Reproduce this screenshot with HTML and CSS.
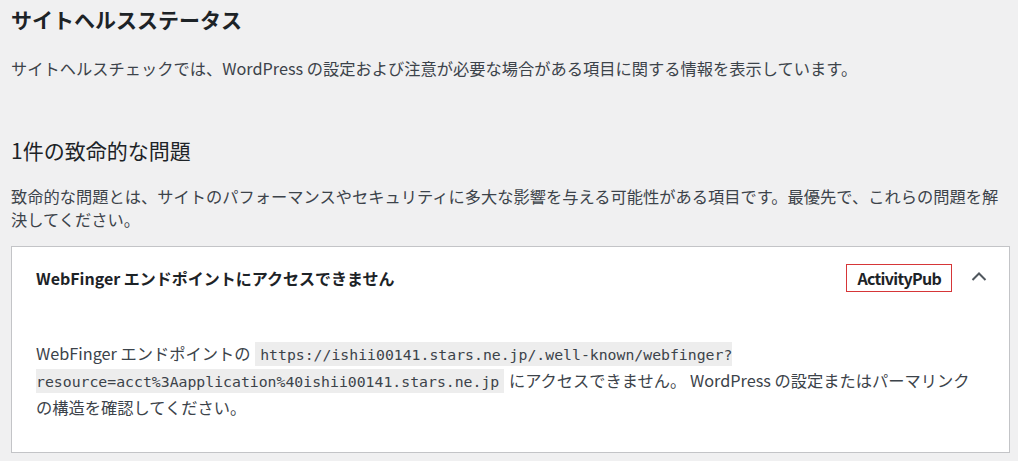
FILE: index.html
```html
<!DOCTYPE html>
<html lang="ja">
<head>
    <meta charset="UTF-8">
    <meta name="viewport" content="width=device-width, initial-scale=1.0">
    <title>サイトヘルスステータス</title>
    <link rel="stylesheet" href="styles.css">
</head>
<body>
    <div class="health-body">
        <h1 class="page-title">サイトヘルスステータス</h1>
        <p class="intro">サイトヘルスチェックでは、WordPress の設定および注意が必要な場合がある項目に関する情報を表示しています。</p>

        <h2 class="issues-title">1件の致命的な問題</h2>
        <p class="issues-desc">致命的な問題とは、サイトのパフォーマンスやセキュリティに多大な影響を与える可能性がある項目です。最優先で、これらの問題を解決してください。</p>

        <!-- Accordion item -->
        <div class="accordion">
            <div class="accordion-trigger">
                <span class="accordion-title">WebFinger エンドポイントにアクセスできません</span>
                <span class="badge red">ActivityPub</span>
                <svg class="icon" width="16" height="10" viewBox="0 0 16 10">
                    <polyline points="1.5,9 8,2.5 14.5,9" fill="none" stroke="#50575e" stroke-width="2"/>
                </svg>
            </div>
            <div class="accordion-panel">
                <p>WebFinger エンドポイントの <code>https://ishii00141.stars.ne.jp/.well-known/webfinger?resource=acct%3Aapplication%40ishii00141.stars.ne.jp</code> にアクセスできません。 WordPress の設定またはパーマリンクの構造を確認してください。</p>
            </div>
        </div>
    </div>
</body>
</html>
```

FILE: styles.css
```css
body {
    margin: 0;
    padding: 0;
    background: #f0f0f1;
    color: #3c434a;
    font-family: "Noto Sans CJK JP", "Noto Sans", sans-serif;
    font-size: 16.25px;
}

.health-body {
    padding: 6px 8px 0 11px;
}

.page-title {
    margin: 0;
    font-size: 21px;
    line-height: 27px;
    font-weight: bold;
    color: #1d2327;
}

.intro {
    margin: 23px 0 0;
    line-height: 24px;
}

.issues-title {
    margin: 57px 0 0;
    font-size: 21px;
    line-height: 27px;
    font-weight: normal;
    color: #1d2327;
}

.issues-desc {
    margin: 21px 0 0;
    line-height: 23px;
}

.accordion {
    margin-top: 15px;
    border: 1px solid #c3c4c7;
    background: #fff;
}

.accordion-trigger {
    display: flex;
    align-items: center;
    padding: 17px 22px 16px 24px;
}

.accordion-title {
    flex: 1;
    font-size: 16px;
    font-weight: bold;
    color: #1d2327;
    line-height: 24px;
}

.badge {
    display: inline-block;
    padding: 2px 10px 2px;
    line-height: 22px;
    font-size: 16px;
    letter-spacing: -0.7px;
    font-weight: bold;
    color: #1d2327;
}

.badge.red {
    border: 1px solid #d63638;
}

.icon {
    margin-left: 19px;
    margin-top: -4px;
}

.accordion-panel {
    padding: 16px 24px;
}

.accordion-panel p {
    margin: 17px 0 17px;
    line-height: 24px;
}

code {
    font-family: "DejaVu Sans Mono", "Liberation Mono", monospace;
    font-size: 14.8px;
    line-height: 27px;
    padding: 4px 5px 3px;
    margin: 0 1px;
    background: rgba(0, 0, 0, 0.07);
    color: #3c434a;
}
```
